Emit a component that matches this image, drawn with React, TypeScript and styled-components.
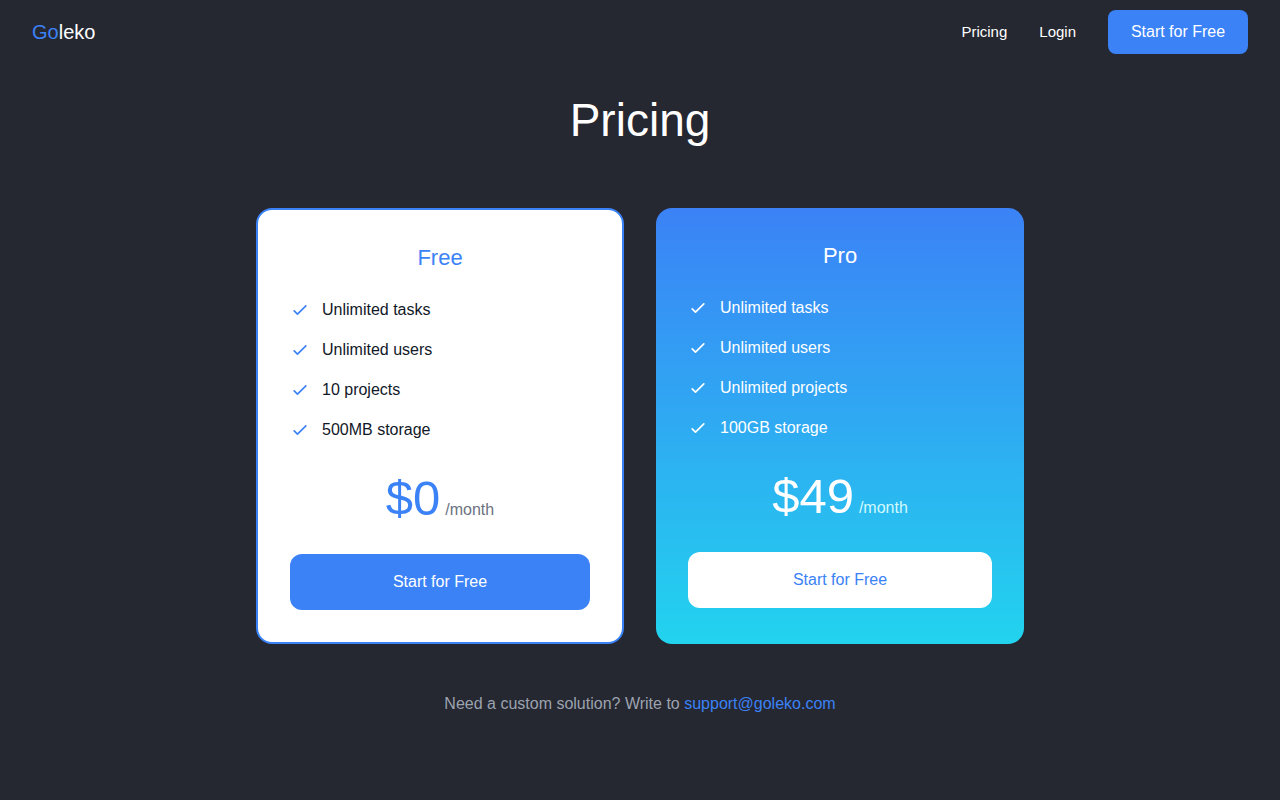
import React from "react";
import styled, { createGlobalStyle } from "styled-components";

const GlobalStyle = createGlobalStyle`
  *, *::before, *::after { box-sizing: border-box; }
  body {
    margin: 0;
    background: #252731;
    color: #fff;
    font-family: "Liberation Sans", Arial, sans-serif;
    font-size: 16px;
    line-height: 24px;
  }
`;

const Header = styled.header`
  display: flex;
  align-items: center;
  justify-content: space-between;
  padding: 10px 32px;
`;

const Logo = styled.a`
  color: #fff;
  font-size: 20px;
  text-decoration: none;
`;

const Accent = styled.span`
  color: #3b82f6;
`;

const Nav = styled.nav`
  display: flex;
  align-items: center;
  gap: 32px;
`;

const NavLink = styled.a`
  color: #fff;
  font-size: 15px;
  text-decoration: none;
`;

const Button = styled.button<{ $light?: boolean }>`
  border: 0;
  font: inherit;
  cursor: pointer;
  background: ${(p) => (p.$light ? "#fff" : "#3b82f6")};
  color: ${(p) => (p.$light ? "#3b82f6" : "#fff")};
`;

const NavButton = styled(Button)`
  min-width: 140px;
  height: 44px;
  padding: 0 20px;
  border-radius: 8px;
`;

const PlanButton = styled(Button)`
  width: 100%;
  height: 56px;
  border-radius: 12px;
`;

const Main = styled.main`
  max-width: 832px;
  margin: 0 auto;
  padding: 32px 32px 48px;
`;

const Title = styled.h1`
  margin: 0 0 64px;
  font-size: 46px;
  font-weight: 400;
  line-height: 48px;
  text-align: center;
`;

const Plans = styled.div`
  display: grid;
  grid-template-columns: repeat(auto-fit, minmax(280px, 1fr));
  gap: 32px;
`;

const Card = styled.section<{ $pro?: boolean }>`
  padding: 32px;
  border-radius: 16px;
  border: ${(p) => (p.$pro ? "0" : "2px solid #3b82f6")};
  background: ${(p) => (p.$pro ? "linear-gradient(to bottom, #3b82f6, #22d3ee)" : "#fff")};
  color: ${(p) => (p.$pro ? "#fff" : "#111827")};
`;

const PlanName = styled.h2<{ $pro?: boolean }>`
  margin: 0 0 24px;
  color: ${(p) => (p.$pro ? "#fff" : "#3b82f6")};
  font-size: 22px;
  font-weight: 400;
  line-height: 32px;
  text-align: center;
`;

const Features = styled.ul`
  display: flex;
  flex-direction: column;
  gap: 16px;
  margin: 0;
  padding: 0;
  list-style: none;
`;

const Feature = styled.li`
  display: flex;
  align-items: center;
  gap: 12px;
`;

const CheckIcon = styled.svg<{ $pro?: boolean }>`
  width: 20px;
  height: 20px;
  flex: none;
  fill: none;
  stroke: ${(p) => (p.$pro ? "#fff" : "#3b82f6")};
  stroke-width: 2;
  stroke-linecap: round;
  stroke-linejoin: round;
`;

const Price = styled.p`
  display: flex;
  align-items: baseline;
  justify-content: center;
  gap: 5px;
  margin: 24px 0;
`;

const Amount = styled.span<{ $pro?: boolean }>`
  color: ${(p) => (p.$pro ? "#fff" : "#3b82f6")};
  font-size: 49px;
  line-height: 64px;
`;

const Period = styled.span<{ $pro?: boolean }>`
  color: ${(p) => (p.$pro ? "#cffafe" : "#6b7280")};
`;

const Contact = styled.p`
  margin: 48px 0 0;
  color: #9ca3af;
  text-align: center;
`;

const MailLink = styled.a`
  color: #3b82f6;
  text-decoration: none;
`;

interface Plan {
  name: string;
  price: string;
  features: string[];
  pro?: boolean;
}

const plans: Plan[] = [
  {
    name: "Free",
    price: "$0",
    features: ["Unlimited tasks", "Unlimited users", "10 projects", "500MB storage"],
  },
  {
    name: "Pro",
    price: "$49",
    features: ["Unlimited tasks", "Unlimited users", "Unlimited projects", "100GB storage"],
    pro: true,
  },
];

function PlanCard({ name, price, features, pro }: Plan) {
  return (
    <Card $pro={pro}>
      <PlanName $pro={pro}>{name}</PlanName>
      <Features>
        {features.map((feature) => (
          <Feature key={feature}>
            <CheckIcon $pro={pro} viewBox="0 0 24 24" aria-hidden="true">
              <path d="M5 13l4 4L19 7" />
            </CheckIcon>
            {feature}
          </Feature>
        ))}
      </Features>
      <Price>
        <Amount $pro={pro}>{price}</Amount>
        <Period $pro={pro}>/month</Period>
      </Price>
      <PlanButton type="button" $light={pro}>Start for Free</PlanButton>
    </Card>
  );
}

export default function App() {
  return (
    <>
      <GlobalStyle />
      <Header>
        <Logo href="#"><Accent>Go</Accent>leko</Logo>
        <Nav>
          <NavLink href="#pricing">Pricing</NavLink>
          <NavLink href="#login">Login</NavLink>
          <NavButton type="button">Start for Free</NavButton>
        </Nav>
      </Header>
      <Main id="pricing">
        <Title>Pricing</Title>
        <Plans>
          {plans.map((plan) => (
            <PlanCard key={plan.name} {...plan} />
          ))}
        </Plans>
        <Contact>
          Need a custom solution? Write to <MailLink href="mailto:support@goleko.com">support@goleko.com</MailLink>
        </Contact>
      </Main>
    </>
  );
}
